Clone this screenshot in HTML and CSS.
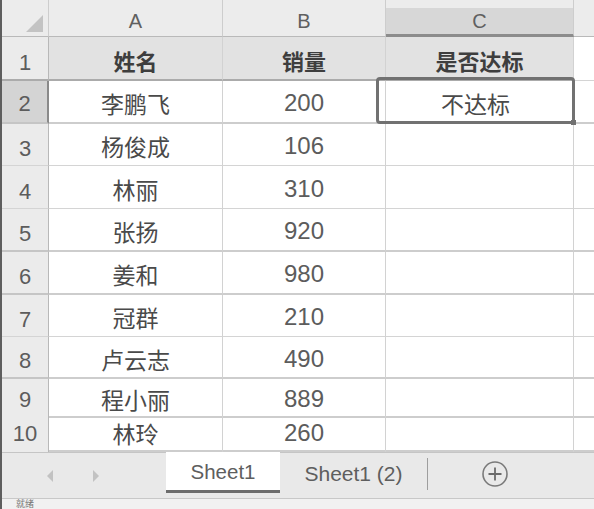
FILE: index.html
```html
<!DOCTYPE html>
<html lang="zh">
<head>
<meta charset="utf-8">
<link rel="stylesheet" href="styles.css">
</head>
<body>
<div class="app">
  <div class="edge"></div>
  <div class="main">
    <div class="sheet">
      <div class="row hdr">
        <div class="c rh corner"><span class="tri"></span></div>
        <div class="c colh">A</div>
        <div class="c colh">B</div>
        <div class="c colh sel">C</div>
        <div class="c colh last"></div>
      </div>
      <div class="row r1 title">
        <div class="c rh">1</div>
        <div class="c t">姓名</div>
        <div class="c t">销量</div>
        <div class="c t">是否达标</div>
        <div class="c last"></div>
      </div>
      <div class="row r2 thick">
        <div class="c rh selrow">2</div>
        <div class="c">李鹏飞</div>
        <div class="c num">200</div>
        <div class="c active"><span>不达标</span><i class="cursor"></i></div>
        <div class="c last"></div>
      </div>
      <div class="row r3">
        <div class="c rh">3</div>
        <div class="c">杨俊成</div>
        <div class="c num">106</div>
        <div class="c"></div>
        <div class="c last"></div>
      </div>
      <div class="row r4">
        <div class="c rh">4</div>
        <div class="c">林丽</div>
        <div class="c num">310</div>
        <div class="c"></div>
        <div class="c last"></div>
      </div>
      <div class="row r5 thick">
        <div class="c rh">5</div>
        <div class="c">张扬</div>
        <div class="c num">920</div>
        <div class="c"></div>
        <div class="c last"></div>
      </div>
      <div class="row r6 thick">
        <div class="c rh">6</div>
        <div class="c">姜和</div>
        <div class="c num">980</div>
        <div class="c"></div>
        <div class="c last"></div>
      </div>
      <div class="row r7">
        <div class="c rh">7</div>
        <div class="c">冠群</div>
        <div class="c num">210</div>
        <div class="c"></div>
        <div class="c last"></div>
      </div>
      <div class="row r8 thick">
        <div class="c rh">8</div>
        <div class="c">卢云志</div>
        <div class="c num">490</div>
        <div class="c"></div>
        <div class="c last"></div>
      </div>
      <div class="row r9 thick">
        <div class="c rh">9</div>
        <div class="c">程小丽</div>
        <div class="c num">889</div>
        <div class="c"></div>
        <div class="c last"></div>
      </div>
      <div class="row r10 thick">
        <div class="c rh">10</div>
        <div class="c">林玲</div>
        <div class="c num">260</div>
        <div class="c"></div>
        <div class="c last"></div>
      </div>
      <div class="row r11">
        <div class="c rh"></div>
        <div class="c"></div>
        <div class="c"></div>
        <div class="c"></div>
        <div class="c last"></div>
      </div>
    </div>
    <div class="tabs">
      <div class="nav">
        <span class="arr left"></span>
        <span class="arr right"></span>
      </div>
      <div class="tab active-tab">Sheet1</div>
      <div class="tab second">Sheet1 (2)</div>
      <div class="sep"></div>
      <div class="add">
        <svg width="28" height="28" viewBox="0 0 28 28">
          <circle cx="14" cy="14" r="12" fill="none" stroke="#7a7a7a" stroke-width="1.6"/>
          <path d="M14 7.5v13M7.5 14h13" stroke="#6a6a6a" stroke-width="1.8" fill="none"/>
        </svg>
      </div>
    </div>
    <div class="status">就绪</div>
  </div>
</div>
</body>
</html>
```
FILE: styles.css
```css
* { box-sizing: border-box; }
html, body { margin: 0; padding: 0; background: #fff; }
body {
  width: 594px;
  height: 509px;
  overflow: hidden;
  font-family: "Liberation Sans", "Noto Sans CJK SC", sans-serif;
  color: #444;
}
.app { display: flex; height: 509px; }
.edge { width: 2px; background: #5e5e5e; flex: none; }
.main { flex: 1; display: flex; flex-direction: column; min-width: 0; }

.sheet { height: 452px; overflow: hidden; }
.row {
  display: grid;
  grid-template-columns: 47px 174px 163px 188px 1fr;
}
.c {
  border-right: 1px solid #d2d2d2;
  border-bottom: 1px solid #d4d4d4;
  display: flex;
  align-items: center;
  justify-content: center;
  padding-top: 3px;
  font-size: 23px;
  color: #4a4a4a;
  white-space: nowrap;
}
.c.last { border-right: none; }
.num { font-size: 24px; color: #5c5c5c; }

.hdr { height: 37px; }
.hdr .c {
  background: #ececec;
  border-bottom: 1px solid #b9b9b9;
  border-right-color: #cdcdcd;
  font-size: 20px;
  color: #606060;
  padding-top: 6px;
}
.hdr .colh.sel {
  background: linear-gradient(#ececec 0 8px, #d7d7d7 8px);
  border-bottom: 3px solid #8c8c8c;
  padding-top: 9px;
}
.corner { position: relative; }
.tri {
  position: absolute;
  left: 24px;
  top: 15px;
  width: 17px;
  height: 17px;
  background: #c3c3c3;
  clip-path: polygon(100% 0, 100% 100%, 0 100%);
}

.rh {
  background: #ebebeb;
  border-right: 1px solid #b8b8b8;
  align-items: flex-end;
  padding-top: 0;
  padding-bottom: 3px;
  font-size: 22px;
  color: #5c5c5c;
}
.rh.selrow {
  background: #d4d4d4;
  border-right: 2px solid #8a8a8a;
  padding-bottom: 5px;
}

.r1 { height: 44px; }
.r2 { height: 43px; }
.r3 { height: 42px; }
.r4 { height: 43px; }
.r5 { height: 43px; }
.r6 { height: 43px; }
.r7 { height: 42px; }
.r8 { height: 42px; }
.r9 { height: 34px; }
.r10 { height: 32px; }
.r11 { height: 7px; }
.r11 .c { border-bottom: none; }

.title .c.t {
  background: #e2e2e2;
  font-weight: 700;
  color: #3e3e3e;
  font-size: 22px;
}
.title .c { border-bottom: 2px solid #ababab; }
.title .c.last { border-bottom: 1px solid #d4d4d4; }
.thick .c { border-bottom: 2px solid #cdcdcd; }
.thick .c.rh { border-bottom-color: #c5c5c5; }

.active { position: relative; }
.active::before {
  content: "";
  position: absolute;
  left: -10px;
  top: -4px;
  right: -2px;
  bottom: -2px;
  border: 3px solid #717171;
  border-radius: 4px;
}
.cursor {
  position: absolute;
  right: -3px;
  bottom: -3px;
  width: 5px;
  height: 5px;
  background: #717171;
}
.active span { position: relative; left: -4px; }

.tabs {
  height: 46px;
  background: #e9e9e9;
  border-top: 1px solid #c5c5c5;
  display: flex;
  align-items: stretch;
}
.nav {
  width: 164px;
  display: flex;
  align-items: center;
  padding-left: 45px;
  gap: 40px;
}
.arr {
  width: 0;
  height: 0;
  border-top: 6px solid transparent;
  border-bottom: 6px solid transparent;
}
.arr.left { border-right: 6px solid #c2c2c2; }
.arr.right { border-left: 6px solid #c2c2c2; }
.tab {
  display: flex;
  align-items: center;
  justify-content: center;
  font-size: 20.5px;
  color: #5e5e5e;
}
.active-tab {
  width: 114px;
  background: #fff;
  margin-top: -1px;
  margin-bottom: 5px;
  border-bottom: 3px solid #6c6c6c;
  padding-top: 2px;
}
.second { width: 147px; font-size: 21px; padding-bottom: 4px; }
.sep {
  width: 1px;
  background: #9e9e9e;
  margin: 5px 0 8px;
}
.add {
  width: 134px;
  display: flex;
  align-items: center;
  justify-content: center;
  padding-bottom: 4px;
}
.status {
  flex: 1;
  background: #f1f1f1;
  border-top: 1px solid #c8c8c8;
  font-size: 9px;
  color: #777;
  padding: 0 0 0 14px;
  overflow: hidden;
  line-height: 10px;
}
```
